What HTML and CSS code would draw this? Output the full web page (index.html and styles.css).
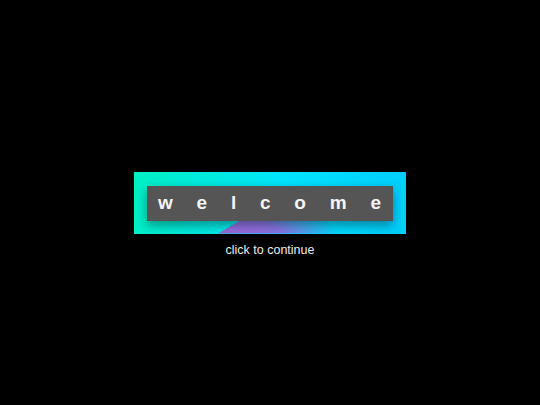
FILE: index.html
```html
<!DOCTYPE html>
<html>
<head>
<meta charset="utf-8">
<link rel="stylesheet" href="styles.css">
</head>
<body>
<main class="stage">
  <div class="welcome">
    <div class="frame">
      <div class="plate">
        <span>w</span><span>e</span><span>l</span><span>c</span><span>o</span><span>m</span><span>e</span>
      </div>
    </div>
    <p class="caption">click to continue</p>
  </div>
</main>
</body>
</html>
```
FILE: styles.css
```css
html, body {
  margin: 0;
  padding: 0;
  background: #000;
  height: 100%;
}
.stage {
  height: 405px;
  display: flex;
  align-items: center;
  justify-content: center;
  font-family: "Liberation Sans", Arial, sans-serif;
}
.welcome {
  position: relative;
}
.frame {
  position: relative;
  width: 272px;
  height: 62px;
  box-sizing: border-box;
  padding: 14px 13px 13px 13px;
  background: linear-gradient(100deg, #00f0c4 0%, #00e9e8 35%, #00e4ff 55%, #00cdfc 100%);
  overflow: hidden;
}
.frame::before {
  content: "";
  position: absolute;
  inset: 0;
  background: radial-gradient(ellipse 100px 40px at 105px 66px, rgba(160, 100, 220, 1) 0%, rgba(150, 105, 225, 0.9) 45%, rgba(60, 150, 240, 0) 100%);
  clip-path: polygon(84px 62px, 150px 24px, 272px 24px, 272px 62px);
}
.plate {
  position: relative;
  height: 35px;
  background: #555;
  box-shadow: 0 4px 10px rgba(0, 0, 0, 0.4);
  display: flex;
  align-items: center;
  justify-content: space-between;
  padding: 0 12px 0 11px;
  color: #f4f4f4;
  font-weight: bold;
  font-size: 19px;
}
.caption {
  position: absolute;
  left: 0;
  right: 0;
  top: 100%;
  margin: 9px 0 0;
  text-align: center;
  color: #eee;
  font-size: 12.5px;
  line-height: 15px;
}
```
